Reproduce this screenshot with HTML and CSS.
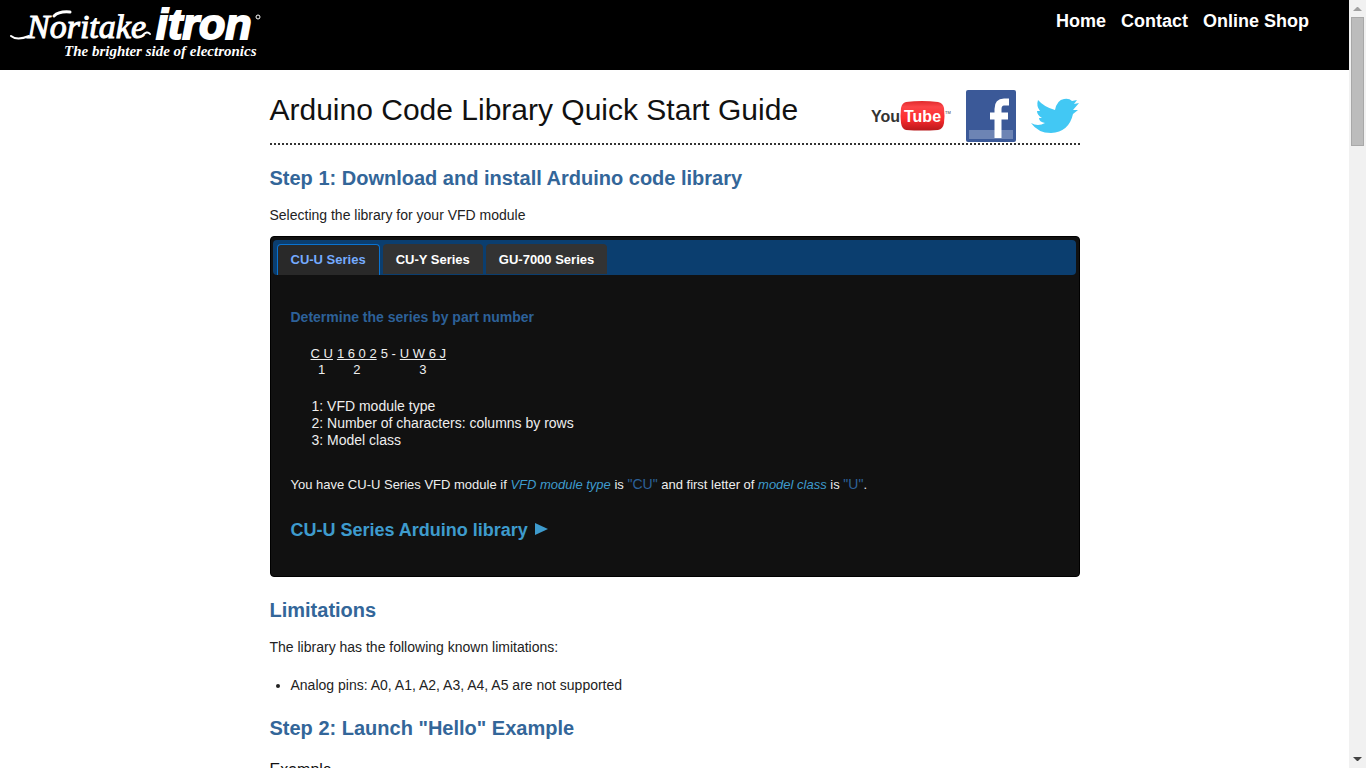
FILE: index.html
```
<!DOCTYPE html>
<html lang="en">
<head>
<meta charset="utf-8">
<title>Arduino Code Library Quick Start Guide</title>
<link rel="stylesheet" href="styles.css">
</head>
<body>
<div class="viewport">
  <div class="page">
    <header class="site-header">
      <a class="brand" href="#" aria-label="Noritake itron">
        <svg width="256" height="54" viewBox="0 0 256 54" fill="#fff">
          <g fill="none" stroke="#fff" stroke-linecap="round">
            <path d="M2 28Q8 33 20 28" stroke-width="2"/>
            <path d="M45 8Q50 3 61 4" stroke-width="3"/>
            <path d="M133 28Q138 22 141 26" stroke-width="2"/>
          </g>
          <text class="brand-script" x="18" y="30">Noritake</text>
          <text class="brand-bold" x="147" y="31">itron</text>
          <circle cx="249" cy="9" r="2" fill="none" stroke="#fff"/>
          <text class="brand-tagline" x="55" y="48">The brighter side of electronics</text>
        </svg>
      </a>
      <nav class="site-nav">
        <a href="#">Home</a>
        <a href="#">Contact</a>
        <a href="#">Online Shop</a>
      </nav>
    </header>
    <main class="content">
      <div class="title-row">
        <h1>Arduino Code Library Quick Start Guide</h1>
        <div class="social">
          <a href="#" aria-label="YouTube">
            <svg width="82" height="32" viewBox="0 0 82 32">
              <defs>
                <linearGradient id="tube" x1="0" y1="0" x2="0" y2="1">
                  <stop offset="0" stop-color="#e02a2c"/>
                  <stop offset=".2" stop-color="#fb4548"/>
                  <stop offset=".6" stop-color="#fd2b2e"/>
                  <stop offset="1" stop-color="#b8191c"/>
                </linearGradient>
              </defs>
              <path d="M36 2Q52 0 68 2Q73 3 74 8Q75 16 74 23Q73 29 68 30Q52 31 36 30Q32 29 31 23Q30 16 31 8Q32 3 36 2Z" fill="url(#tube)"/>
              <text class="tube-text" x="1" y="22" fill="#333">You</text>
              <text class="tube-text" x="34" y="22" fill="#fff">Tube</text>
              <text class="tube-mark" x="75" y="14" fill="#333">TM</text>
            </svg>
          </a>
          <a href="#" aria-label="Facebook">
            <svg width="50" height="52" viewBox="0 0 50 52">
              <rect width="50" height="52" rx="2" fill="#3b5998"/>
              <rect x="3" y="40" width="44" height="9" fill="#6d84b4"/>
              <path d="M32 48V19Q32 12 38 12H43M24 26H42" fill="none" stroke="#fff" stroke-width="7"/>
            </svg>
          </a>
          <a href="#" aria-label="Twitter">
            <svg width="50" height="36" viewBox="0 0 50 36">
              <path d="M1 25Q8 29 15 25Q9 24 9 20H12Q7 17 7 13L10 13Q6 8 8 2Q14 9 25 12Q27 2 34 1Q39 0 42 3L47 2L44 6L49 5L43 12L48 12L43 16Q39 34 21 35Q8 35 1 25Z" fill="#42c8f4"/>
            </svg>
          </a>
        </div>
      </div>

      <h2>Step 1: Download and install Arduino code library</h2>
      <p>Selecting the library for your VFD module</p>

      <section class="tabs">
        <div class="tab-bar" role="tablist">
          <button class="tab tab-active" role="tab" aria-selected="true">CU-U Series</button>
          <button class="tab" role="tab" aria-selected="false">CU-Y Series</button>
          <button class="tab" role="tab" aria-selected="false">GU-7000 Series</button>
        </div>
        <div class="tab-panel" role="tabpanel">
          <h3>Determine the series by part number</h3>
          <div class="part-number">
            <span class="part"><u>C U</u><span>1</span></span>
            <span class="part"><u>1 6 0 2</u><span>2</span></span>
            <span>5 -</span>
            <span class="part"><u>U W 6 J</u><span>3</span></span>
          </div>
          <div class="legend">
            <div>1: VFD module type</div>
            <div>2: Number of characters: columns by rows</div>
            <div>3: Model class</div>
          </div>
          <p class="rule">You have CU-U Series VFD module if <em>VFD module type</em> is <span class="value">"CU"</span> and first letter of <em>model class</em> is <span class="value">"U"</span>.</p>
          <a class="library-link" href="#">CU-U Series Arduino library
            <svg width="14" height="14" viewBox="0 0 14 14"><path d="M0 1L13 7L0 13Z" fill="#3e9bcd"/></svg></a>
        </div>
      </section>

      <h2>Limitations</h2>
      <p>The library has the following known limitations:</p>
      <ul>
        <li>Analog pins: A0, A1, A2, A3, A4, A5 are not supported</li>
      </ul>

      <h2>Step 2: Launch "Hello" Example</h2>
      <h4>Example</h4>
    </main>
  </div>
  <div class="scrollbar" aria-hidden="true">
    <svg width="17" height="17" viewBox="0 0 17 17"><path d="M4 11L8 7H9L13 11Z" fill="#a0a0a0"/></svg>
    <div class="thumb"></div>
    <svg width="17" height="17" viewBox="0 0 17 17"><path d="M4 6H13L9 10H8Z" fill="#444"/></svg>
  </div>
</div>
</body>
</html>
```

FILE: styles.css
```
* {
  box-sizing: border-box;
}

body {
  margin: 0;
  background: #fff;
  color: #222;
  font: 14px/20px "Liberation Sans", Arial, sans-serif;
}

.viewport {
  display: flex;
  height: 100vh;
  overflow: hidden;
}

.page {
  flex: 1;
  overflow: hidden;
}

.site-header {
  display: flex;
  justify-content: space-between;
  align-items: flex-start;
  height: 70px;
  padding: 8px 40px 8px 9px;
  background: #000;
}

.brand svg {
  display: block;
  overflow: visible;
}

.brand-script {
  font: italic 34px "Liberation Serif", serif;
  stroke: #fff;
}

.brand-bold {
  font: italic bold 43px "Liberation Sans", sans-serif;
  stroke: #fff;
  stroke-width: 2px;
}

.brand-tagline {
  font: italic bold 15px "Liberation Serif", serif;
}

.site-nav {
  display: flex;
  gap: 15px;
  padding-top: 3px;
}

.site-nav a {
  color: #fff;
  font-size: 18px;
  font-weight: bold;
  text-decoration: none;
}

.content {
  max-width: 810px;
  margin: 0 auto;
  padding-top: 20px;
}

.title-row {
  display: flex;
  justify-content: space-between;
  height: 55px;
  border-bottom: 2px dotted #333;
}

h1 {
  margin: 0;
  color: #111;
  font-size: 30px;
  font-weight: normal;
  line-height: 40px;
}

.social {
  display: flex;
  align-items: center;
  gap: 14px;
  height: 52px;
}

.social svg {
  display: block;
}

.tube-text {
  font: bold 16px "Liberation Sans", sans-serif;
}

.tube-mark {
  font: 4px "Liberation Sans", sans-serif;
}

h2 {
  margin: 20px 0 14px;
  color: #369;
  font-size: 20px;
  line-height: 26px;
}

p {
  margin: 0;
  line-height: 20px;
}

.tabs {
  margin-top: 11px;
  padding: 3px 3px 3px 2px;
  border: 1px solid #000;
  border-radius: 4px;
  background: #111;
  color: #eee;
}

.tab-bar {
  display: flex;
  gap: 3px;
  height: 35px;
  padding: 4px 4px 0;
  border-radius: 4px;
  background: #0b3e6f;
}

.tab {
  height: 30px;
  padding: 0 13px;
  border: 0;
  border-radius: 4px 4px 0 0;
  background: #333;
  color: #fff;
  font: bold 13px "Liberation Sans", Arial, sans-serif;
}

.tab-active {
  height: 31px;
  padding: 0 13px 1px;
  border: 1px solid #0972d0;
  border-bottom: 0;
  background: #292929;
  color: #75abff;
}

.tab-panel {
  padding: 32px 18px 31px;
}

h3 {
  margin: 0 0 19px;
  color: #2d6199;
  font-size: 14px;
  line-height: 20px;
}

.part-number {
  display: flex;
  gap: 4px;
  padding-left: 20px;
  font-size: 13px;
  line-height: 16px;
}

.part {
  display: grid;
  justify-items: center;
}

.legend {
  margin: 20px 0 25px 21px;
  line-height: 17px;
}

.rule {
  font-size: 13px;
}

.rule em {
  color: #3e9bcd;
}

.value {
  color: #2d6199;
  font-size: 14px;
}

.library-link {
  display: inline-block;
  margin-top: 23px;
  color: #3e9bcd;
  font-size: 18px;
  font-weight: bold;
  line-height: 24px;
  text-decoration: none;
}

.library-link svg {
  margin-left: 2px;
}

ul {
  margin: 18px 0 0;
  padding-left: 21px;
}

h4 {
  margin: 0;
  padding-top: 5px;
  color: #111;
  font-size: 16px;
  font-weight: normal;
}

.scrollbar {
  display: flex;
  flex-direction: column;
  width: 17px;
  background: #f1f1f1;
}

.scrollbar svg {
  display: block;
}

.thumb {
  height: 129px;
  margin: 0 2px auto;
  border: 1px solid #a8a8a8;
  background: #bcbcbc;
}
```
